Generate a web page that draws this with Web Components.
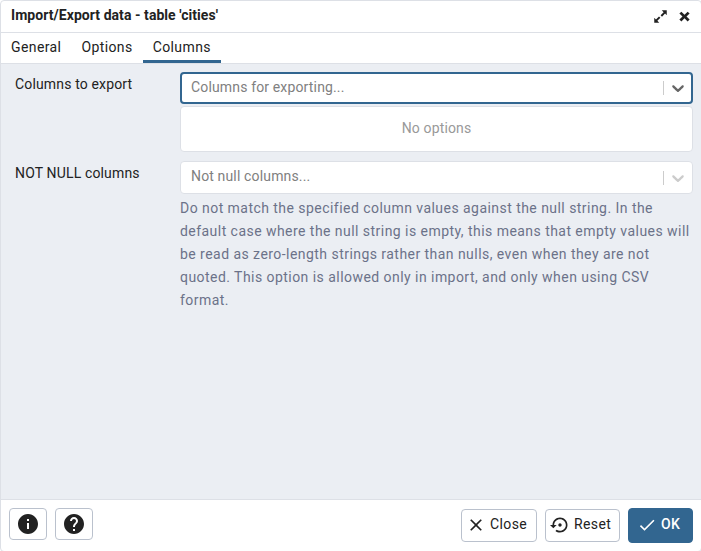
<!DOCTYPE html>
<html lang="en">
<head>
<meta charset="utf-8">
<title>Import/Export data</title>
<style>
  html { overflow: hidden; }
  body { margin: 0; height: 551px; overflow: hidden; background: #fff; font: 14px/21px Roboto, sans-serif; color: #222; }
</style>
</head>
<body>
<export-dialog></export-dialog>
<script>
const define = (name, markup) => {
  customElements.define(name, class extends HTMLElement {
    constructor() {
      super();
      const t = document.createElement('template');
      t.innerHTML = markup;
      this.attachShadow({ mode: 'open' }).appendChild(t.content.cloneNode(true));
    }
  });
};

const ICONS = {
  info: 'M12 2C6.48 2 2 6.48 2 12s4.48 10 10 10 10-4.48 10-10S17.52 2 12 2zm1 15h-2v-6h2v6zm0-8h-2V7h2v2z',
  help: 'M12 2C6.48 2 2 6.48 2 12s4.48 10 10 10 10-4.48 10-10S17.52 2 12 2zm1 17h-2v-2h2v2zm2.07-7.75l-.9.92C13.45 12.9 13 13.5 13 15h-2v-.5c0-1.1.45-2.1 1.17-2.83l1.24-1.26c.37-.36.59-.86.59-1.41 0-1.1-.9-2-2-2s-2 .9-2 2H8c0-2.21 1.79-4 4-4s4 1.79 4 4c0 .88-.36 1.68-.93 2.25z',
  close: 'M19 6.41L17.59 5 12 10.59 6.41 5 5 6.41 10.59 12 5 17.59 6.41 19 12 13.41 17.59 19 19 17.59 13.41 12z',
  reset: 'M14 12c0-1.1-.9-2-2-2s-2 .9-2 2 .9 2 2 2 2-.9 2-2zm-2-9c-4.97 0-9 4.03-9 9H0l4 4 4-4H5c0-3.87 3.13-7 7-7s7 3.13 7 7-3.13 7-7 7c-1.51 0-2.91-.49-4.06-1.3l-1.42 1.44C8.04 20.3 9.94 21 12 21c4.97 0 9-4.03 9-9s-4.03-9-9-9z',
  check: 'M9 16.17L4.83 12l-1.42 1.41L9 19 21 7l-1.41-1.41z',
  expand: 'M14 2H22v8l-2.7-2.7-4.9 4.9-2.2-2.2 4.8-4.9zM10 22H2v-8l2.7 2.7 4.9-4.9 2.2 2.2-4.8 4.9z',
  cross: 'M7 4.2L12 9.2 17 4.2 20.2 7.2 15.2 12 20.2 16.8 17 19.8 12 14.8 7 19.8 3.8 16.8 8.8 12 3.8 7.2z',
  chevron: 'M5.42 9.06c.52-.54 1.25-.58 1.89 0L12 13.55l4.69-4.49c.64-.58 1.37-.54 1.89 0 .52.53.49 1.43 0 1.93-.49.5-5.63 5.4-5.63 5.4-.26.27-.6.4-.95.4s-.68-.13-.95-.4c0 0-5.14-4.9-5.63-5.4s-.52-1.4 0-1.93z'
};
customElements.define('ui-icon', class extends HTMLElement {
  constructor() {
    super();
    const s = this.getAttribute('size') || 20;
    this.attachShadow({ mode: 'open' }).innerHTML = `
      <style>:host{display:block;flex:none;width:${s}px;height:${s}px} svg{display:block;fill:currentColor}</style>
      <svg width="${s}" height="${s}" viewBox="0 0 24 24"><path d="${ICONS[this.getAttribute('name')]}"/></svg>`;
  }
});

define('dialog-title', `
  <style>
    :host{display:flex;align-items:center;height:31px;padding:0 8px 0 10px;border-bottom:1px solid #dde0e6;font-weight:700;font-size:14px}
    .t{flex:1;line-height:20px;padding-bottom:3px;letter-spacing:.055px}
    .i{display:flex;align-items:center;gap:9px;padding-bottom:1px}
  </style>
  <div class="t"><slot></slot></div>
  <div class="i"><ui-icon name="expand" size="15"></ui-icon><ui-icon name="cross" size="15"></ui-icon></div>`);

define('tab-bar', `
  <style>:host{display:flex;height:30px;border-bottom:1px solid #dde0e6}</style><slot></slot>`);

define('tab-item', `
  <style>
    :host{display:block;box-sizing:border-box;height:30px;padding:4px 10px 0;line-height:21px;letter-spacing:.4px}
    :host([selected]){border-bottom:3px solid #326690}
  </style><slot></slot>`);

define('form-row', `
  <style>
    :host{display:flex;align-items:flex-start}
    .l{width:165px;flex:none;padding-top:2px;line-height:21px;letter-spacing:.15px}
    .c{flex:1;min-width:0}
  </style>
  <div class="l"><slot name="label"></slot></div><div class="c"><slot></slot></div>`);

define('select-box', `
  <style>
    :host{display:flex;align-items:center;box-sizing:border-box;height:33px;padding:0 4px 0 10px;border:1px solid #dde0e6;border-radius:4px;background:#fff;color:#ccc}
    :host([focused]){height:32px;border:2px solid #326690;padding:0 3px 0 9px;color:#666}
    .p{flex:1;color:#808080;line-height:20px;padding-bottom:3px;letter-spacing:.15px}
    .s{width:1px;height:14px;background:#ccc;margin-right:4px}
  </style>
  <div class="p"><slot></slot></div><div class="s"></div><ui-icon name="chevron"></ui-icon>`);

define('select-menu', `
  <style>
    :host{display:flex;align-items:center;justify-content:center;box-sizing:border-box;height:46px;margin-top:2px;padding-bottom:1px;border:1px solid #dde0e6;border-radius:4px;background:#fff;color:#999;letter-spacing:.15px}
  </style><slot></slot>`);

define('help-text', `
  <style>:host{display:block;padding-top:3px;line-height:23px;color:#6b7289;letter-spacing:.455px}</style><slot></slot>`);

define('ui-button', `
  <style>
    :host{display:flex;align-items:center;box-sizing:border-box;height:33px;padding-left:4px;border:1px solid #bac1cd;border-radius:4px;background:#fff;gap:4px;letter-spacing:.4px;line-height:20px}
    :host([icon]){width:38px;height:32px;padding:0;justify-content:center}
    :host([primary]){height:35px;padding-left:8px;background:#326690;border-color:#326690;color:#fff;font-weight:500}
    ::slotted(span){padding-bottom:2px}
  </style><slot></slot>`);

define('export-dialog', `
  <style>
    :host{display:flex;flex-direction:column;box-sizing:border-box;width:702px;height:552px;border:1px solid #dde0e6;border-radius:4px;overflow:hidden;background:#fff}
    dialog-title{margin-right:0;padding-right:9px}
    main{flex:1;background:#ebeef3;padding:8px 8px 0 14px;display:flex;flex-direction:column;gap:9px}
    footer{display:flex;align-items:center;box-sizing:border-box;height:52px;border-top:1px solid #dde0e6;padding:0 8px 1px 8px;gap:8px}
    .sp{flex:1}
    .b{padding-bottom:2px}
  </style>
  <dialog-title>Import/Export data - table 'cities'</dialog-title>
  <tab-bar><tab-item>General</tab-item><tab-item>Options</tab-item><tab-item selected>Columns</tab-item></tab-bar>
  <main>
    <form-row><span slot="label">Columns to export</span>
      <select-box focused>Columns for exporting...</select-box><select-menu>No options</select-menu></form-row>
    <form-row><span slot="label">NOT NULL columns</span>
      <select-box>Not null columns...</select-box>
      <help-text>Do not match the specified column values against the null string. In the default case where the null string is empty, this means that empty values will be read as zero-length strings rather than nulls, even when they are not quoted. This option is allowed only in import, and only when using CSV format.</help-text></form-row>
  </main>
  <footer>
    <div class="b"><ui-button icon><ui-icon name="info" size="24"></ui-icon></ui-button></div>
    <div class="b"><ui-button icon><ui-icon name="help" size="24"></ui-icon></ui-button></div>
    <div class="sp"></div>
    <ui-button style="width:76px"><ui-icon name="close"></ui-icon><span>Close</span></ui-button>
    <ui-button style="width:75px"><ui-icon name="reset"></ui-icon><span>Reset</span></ui-button>
    <ui-button primary style="width:65px"><ui-icon name="check"></ui-icon><span>OK</span></ui-button>
  </footer>`);
</script>
</body>
</html>
